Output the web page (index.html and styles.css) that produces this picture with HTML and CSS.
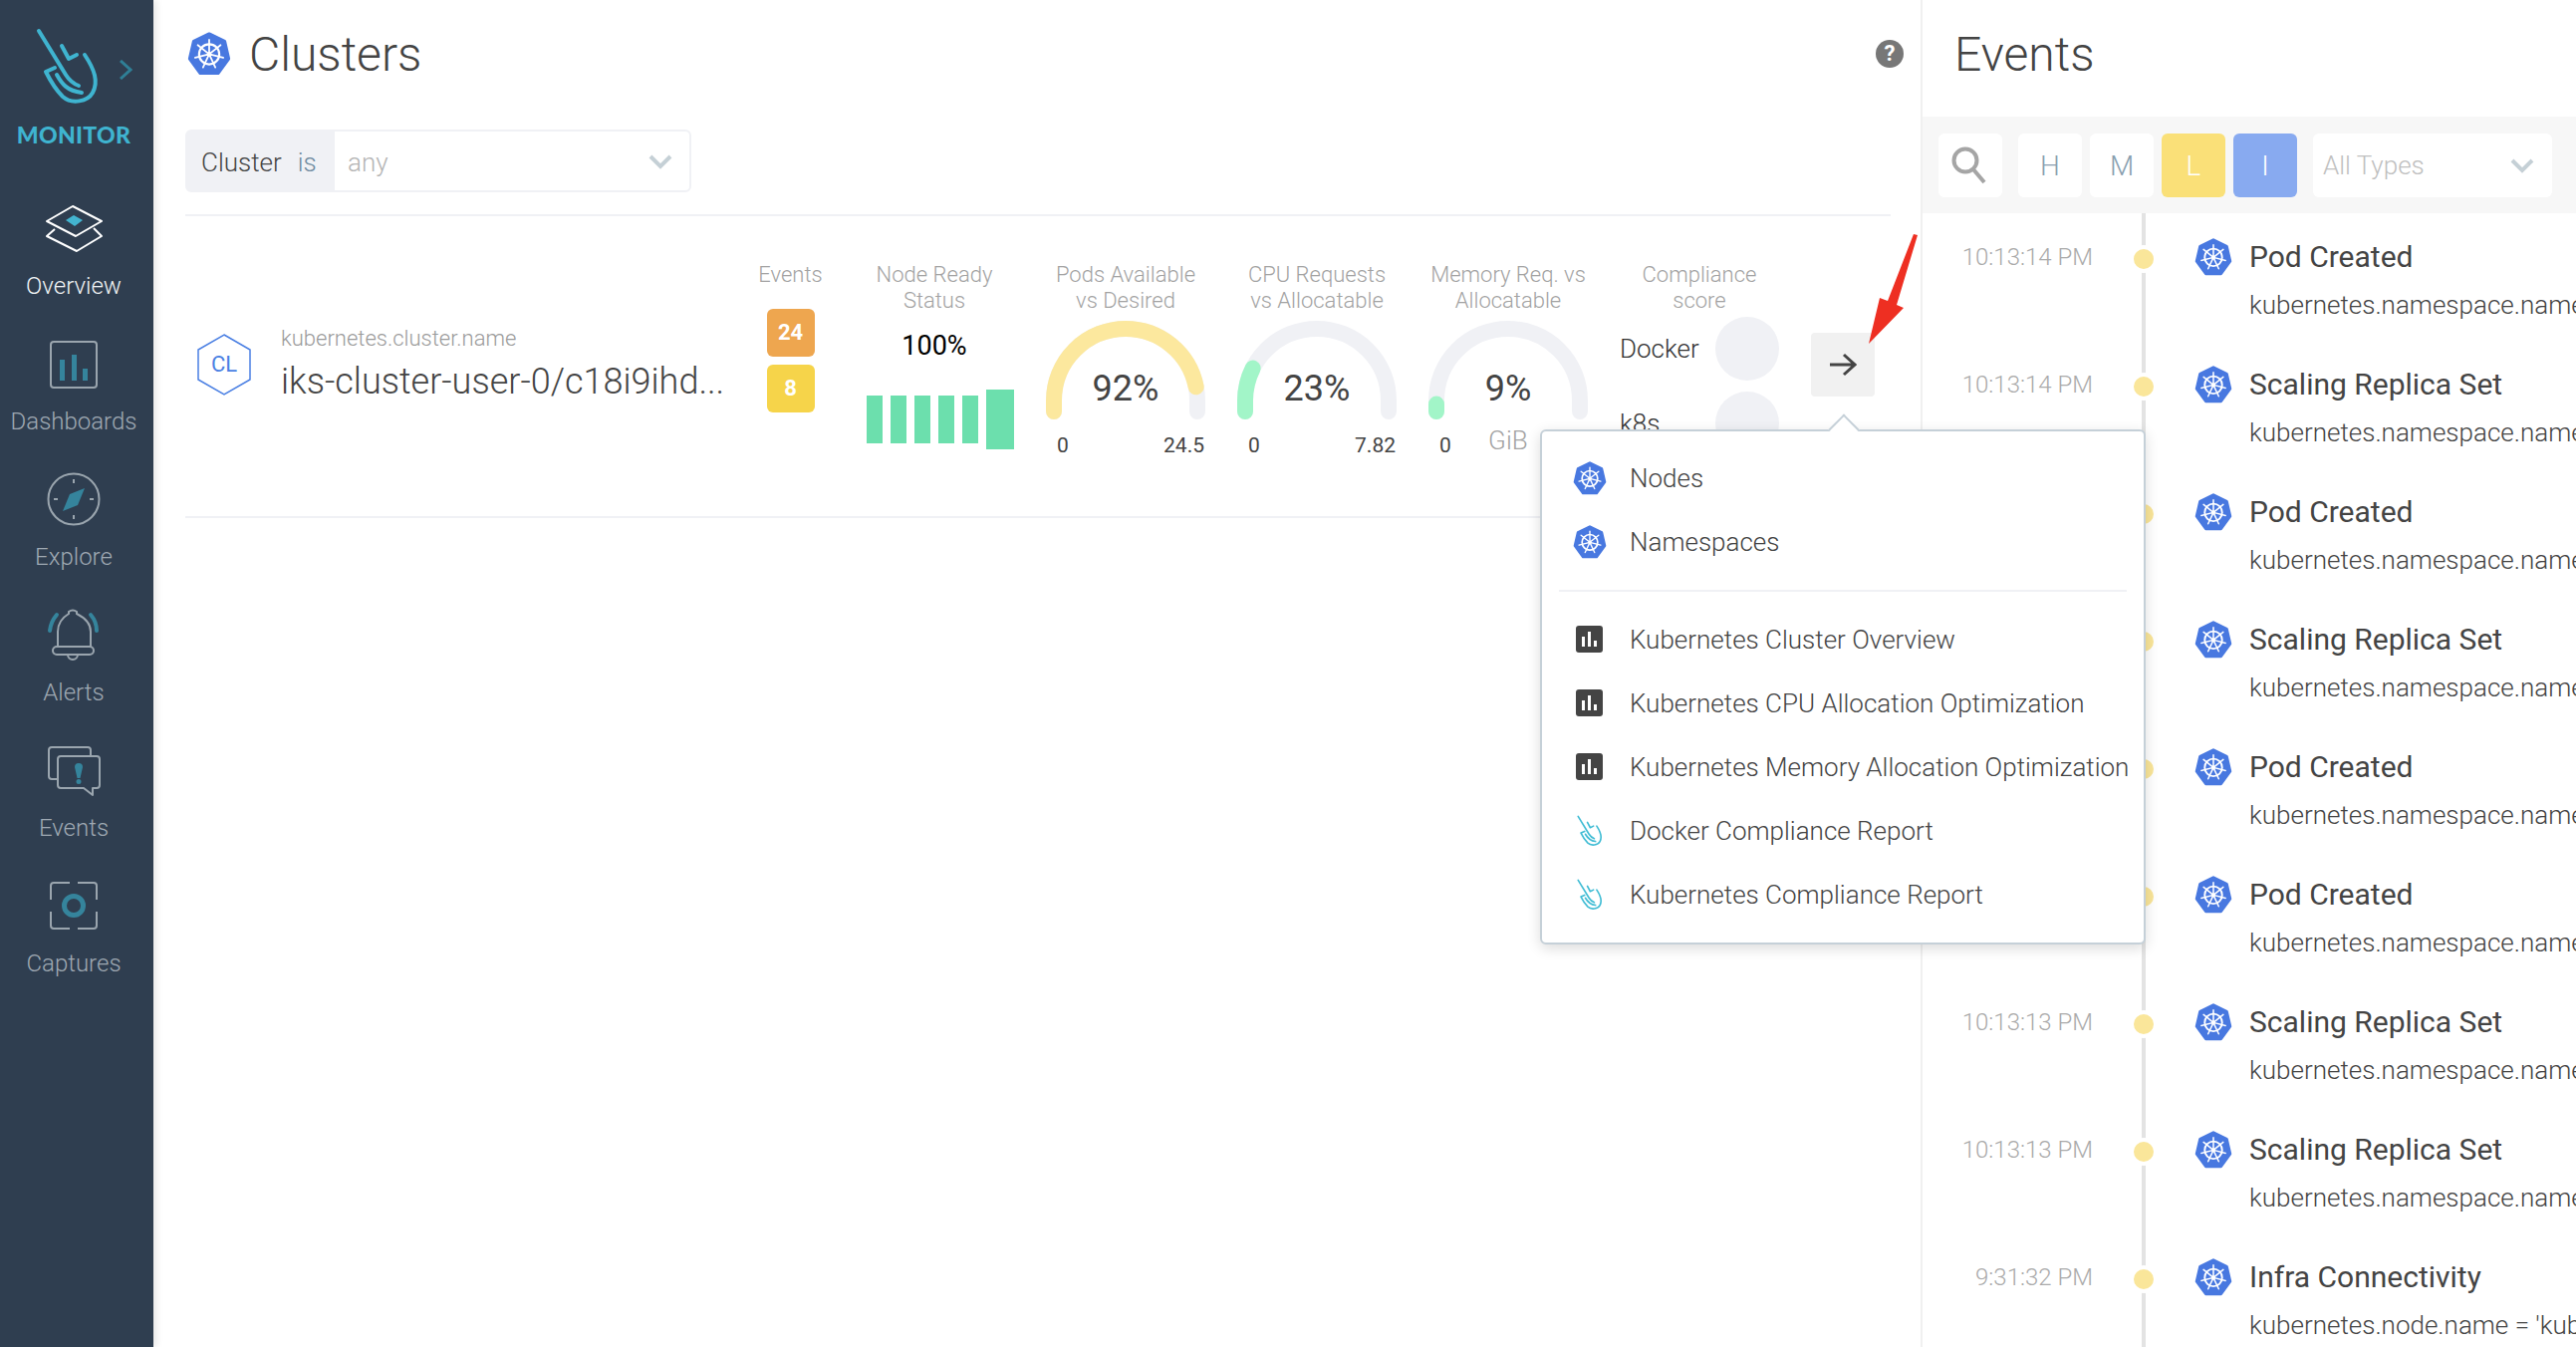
FILE: index.html
```html
<!DOCTYPE html>
<html>
<head>
    <meta charset="utf-8" />
    <title>Clusters</title>
    <link rel="stylesheet" href="styles.css">
</head>
<body>
    <svg class="defs" width="0" height="0">
        <symbol id="kube" viewBox="0 0 100 100">
            <polygon points="50,5 85,22 94,61 70,94 30,94 6,61 15,22" fill="#4878e0" stroke="#4878e0" stroke-width="8" stroke-linejoin="round" />
            <g fill="none" stroke="#fff">
                <circle cx="50" cy="51" r="23" stroke-width="5" />
                <circle cx="50" cy="51" r="5" fill="#fff" stroke="none" />
                <path stroke-width="4" stroke-linecap="round" d="M50 51V18M50 51L76 30M50 51L82 59M50 51L64 81M50 51L36 81M50 51L18 59M50 51L24 30" />
            </g>
        </symbol>
        <symbol id="logo" viewBox="36 26 64 78">
            <g fill="none" stroke="currentColor" stroke-width="4" stroke-linecap="round" stroke-linejoin="round">
                <path d="M39 29L66 73Q71 81 79 84" />
                <path d="M62 44L69 57L77 53" />
                <path d="M85 53C95 68 99 80 93 91C88 100 72 103 63 95C57 89 50 78 46 70L55 66" />
                <path d="M57 73C62 82 67 89 82 91" />
            </g>
        </symbol>
        <symbol id="chart" viewBox="0 0 27 27">
            <rect width="27" height="27" rx="3" fill="#444" />
            <path fill="#fff" d="M6 11h3v10H6zM12 6h3v15h-3zM18 15h3v6h-3z" />
        </symbol>
        <symbol id="chev" viewBox="0 0 24 16">
            <path d="M2 3l10 10L22 3" fill="none" stroke="#c5d0d6" stroke-width="4" />
        </symbol>
    </svg>

    <nav class="side">
        <div class="brand">
            <svg class="brand-logo"><use href="#logo" /></svg>
            <svg class="brand-chev" viewBox="0 0 13 20"><path d="M1 1l10 9-10 9" fill="none" stroke="#2f7f96" stroke-width="3" /></svg>
            <div class="brand-name">MONITOR</div>
        </div>
        <a class="nav-item active">
            <svg class="nav-icon" viewBox="44 197 60 64">
                <path fill="none" stroke="#fff" stroke-width="2" stroke-linejoin="round" d="M73 207L102 222L76 237L47 222Z" />
                <path fill="none" stroke="#fff" stroke-width="2" stroke-linejoin="round" d="M55 230L47 237L77 252L102 237L94 229" />
                <path fill="#43b4d0" d="M66 221L74 216L83 221L75 227Z" />
            </svg>
            <span>Overview</span>
        </a>
        <a class="nav-item">
            <svg class="nav-icon" viewBox="44 333 60 64">
                <rect x="51" y="343" width="46" height="46" rx="3" fill="none" stroke="#9aa5ae" stroke-width="2" />
                <path fill="#35849c" d="M60 361h5v21h-5zM72 356h5v26h-5zM83 370h5v12h-5z" />
            </svg>
            <span>Dashboards</span>
        </a>
        <a class="nav-item">
            <svg class="nav-icon" viewBox="44 470 60 64">
                <circle cx="74" cy="502" r="25.500" fill="none" stroke="#9aa5ae" stroke-width="2" />
                <path stroke="#9aa5ae" stroke-width="2" d="M74 482v4M74 518v4M54 502h4M90 502h4" />
                <path fill="#35849c" d="M85 491L78 508L63 514L70 497Z" />
            </svg>
            <span>Explore</span>
        </a>
        <a class="nav-item">
            <svg class="nav-icon" viewBox="44 606 60 64">
                <g fill="none" stroke="#9aa5ae" stroke-width="2">
                    <path d="M58 650V635C58 625 64 620 69 617V615Q73 612 77 615V617C83 620 91 625 91 635V650" />
                    <rect x="53" y="650" width="41" height="8" rx="4" />
                    <path d="M68 658a5 5 0 0 0 10 0" />
                </g>
                <path fill="none" stroke="#35849c" stroke-width="4" stroke-linecap="round" d="M57 618Q51 625 50 634M91 618Q97 625 97 634" />
            </svg>
            <span>Alerts</span>
        </a>
        <a class="nav-item">
            <svg class="nav-icon" viewBox="44 742 60 64">
                <g fill="none" stroke="#9aa5ae" stroke-width="2" stroke-linejoin="round">
                    <path d="M58 783H52Q49 783 49 780V754Q49 751 52 751H88Q91 751 91 754V760" />
                    <path d="M61 760H97Q100 760 100 763V789Q100 792 97 792H93V799L84 792H61Q58 792 58 789V763Q58 760 61 760Z" />
                </g>
                <path fill="#35849c" d="M75 771a4 4 0 0 1 8 0L80.500 782h-3zM79 783a2.500 2.500 0 1 1 0 5a2.500 2.500 0 1 1 0-5z" />
            </svg>
            <span>Events</span>
        </a>
        <a class="nav-item">
            <svg class="nav-icon" viewBox="44 878 60 64">
                <path fill="none" stroke="#9aa5ae" stroke-width="2" d="M70 887H54Q51 887 51 890V904M78 887H94Q97 887 97 890V904M70 933H54Q51 933 51 930V916M78 933H94Q97 933 97 930V916" />
                <circle cx="74" cy="910" r="9.500" fill="none" stroke="#35849c" stroke-width="5" />
            </svg>
            <span>Captures</span>
        </a>
    </nav>

    <main class="main">
        <header class="page-head">
            <svg class="head-icon"><use href="#kube" /></svg>
            <h1 class="page-title">Clusters</h1>
            <div class="help">?</div>
        </header>

        <div class="filter">
            <div class="filter-label">Cluster <em>is</em></div>
            <div class="filter-value">any</div>
            <svg class="chev"><use href="#chev" /></svg>
        </div>

        <section class="row">
            <div class="entity">
                <svg class="hex" viewBox="0 0 54 62">
                    <polygon points="27,1 53,16 53,46 27,61 1,46 1,16" fill="none" stroke="#4a7fe3" stroke-width="1.500" />
                    <text x="27" y="38" text-anchor="middle" class="hex-text">CL</text>
                </svg>
                <div class="entity-text">
                    <div class="entity-key">kubernetes.cluster.name</div>
                    <div class="entity-name">iks-cluster-user-0/c18i9ihd...</div>
                </div>
            </div>

            <div class="col col-events">
                <div class="col-label">Events</div>
                <div class="badge badge-med">24</div>
                <div class="badge badge-low">8</div>
            </div>

            <div class="col">
                <div class="col-label">Node Ready<br>Status</div>
                <div class="ready">100%</div>
                <div class="bars">
                    <i></i><i></i><i></i><i></i><i></i><i class="bar-last"></i>
                </div>
            </div>

            <div class="col">
                <div class="col-label">Pods Available<br>vs Desired</div>
                <div class="gauge">
                    <svg width="160" height="100" viewBox="0 0 160 100">
                        <path class="arc" d="M8 91V80A72 72 0 0 1 152 80V91" />
                        <path class="arc arc-yellow" pathLength="100" stroke-dasharray="90 200" d="M8 91V80A72 72 0 0 1 152 80V91" />
                    </svg>
                    <div class="gauge-value">92%</div>
                </div>
                <div class="scale"><span>0</span><span>24.5</span></div>
            </div>

            <div class="col">
                <div class="col-label">CPU Requests<br>vs Allocatable</div>
                <div class="gauge">
                    <svg width="160" height="100" viewBox="0 0 160 100">
                        <path class="arc" d="M8 91V80A72 72 0 0 1 152 80V91" />
                        <path class="arc arc-green" pathLength="100" stroke-dasharray="18 200" d="M8 91V80A72 72 0 0 1 152 80V91" />
                    </svg>
                    <div class="gauge-value">23%</div>
                </div>
                <div class="scale"><span>0</span><span>7.82</span></div>
            </div>

            <div class="col">
                <div class="col-label">Memory Req. vs<br>Allocatable</div>
                <div class="gauge">
                    <svg width="160" height="100" viewBox="0 0 160 100">
                        <path class="arc" d="M8 91V80A72 72 0 0 1 152 80V91" />
                        <path class="arc arc-green" pathLength="100" stroke-dasharray="3 200" d="M8 91V80A72 72 0 0 1 152 80V91" />
                    </svg>
                    <div class="gauge-value">9%</div>
                </div>
                <div class="scale scale-mem"><span>0</span><span class="unit">GiB</span><span class="pad"></span></div>
            </div>

            <div class="col">
                <div class="col-label">Compliance<br>score</div>
                <div class="comp-list">
                    <div class="comp"><span>Docker</span><i></i></div>
                    <div class="comp"><span>k8s</span><i></i></div>
                </div>
            </div>

            <div class="go">
                <svg viewBox="0 0 28 24" width="28" height="24"><path d="M1 12h25M15 2l11 10-11 10" fill="none" stroke="#444" stroke-width="3" /></svg>
            </div>
        </section>

        <div class="popover">
            <div class="pop-item"><svg class="pop-kube"><use href="#kube" /></svg>Nodes</div>
            <div class="pop-item"><svg class="pop-kube"><use href="#kube" /></svg>Namespaces</div>
            <div class="pop-sep"></div>
            <div class="pop-item"><svg class="pop-chart"><use href="#chart" /></svg>Kubernetes Cluster Overview</div>
            <div class="pop-item"><svg class="pop-chart"><use href="#chart" /></svg>Kubernetes CPU Allocation Optimization</div>
            <div class="pop-item"><svg class="pop-chart"><use href="#chart" /></svg>Kubernetes Memory Allocation Optimization</div>
            <div class="pop-item"><svg class="pop-logo"><use href="#logo" /></svg>Docker Compliance Report</div>
            <div class="pop-item"><svg class="pop-logo"><use href="#logo" /></svg>Kubernetes Compliance Report</div>
        </div>

        <!-- red annotation arrow -->
        <svg class="mark" width="60" height="125" viewBox="1870 230 60 125">
            <path fill="#ee2f22" d="M1876 345L1887 299L1895 302L1921 235L1925 236L1904 306L1911 309Z" />
        </svg>
    </main>

    <aside class="events">
        <h2 class="events-title">Events</h2>
        <div class="tools">
            <div class="tool">
                <svg width="40" height="40" viewBox="0 0 40 40"><circle cx="15" cy="15" r="11.500" fill="none" stroke="#a5a5a5" stroke-width="4" /><path d="M23 24l11 13" stroke="#a5a5a5" stroke-width="4" /></svg>
            </div>
            <div class="tool tool-h">H</div>
            <div class="tool">M</div>
            <div class="tool tool-l">L</div>
            <div class="tool tool-i">I</div>
            <div class="tool-select">All Types<svg class="chev"><use href="#chev" /></svg></div>
            <div class="tool-select">All Types</div>
        </div>
        <div class="timeline">
            <div class="ev"><time>10:13:14 PM</time><i class="dot"></i><svg class="ev-icon"><use href="#kube" /></svg><div class="ev-body"><div class="ev-title">Pod Created</div><div class="ev-sub">kubernetes.namespace.name = 'kube-system'</div></div></div>
            <div class="ev"><time>10:13:14 PM</time><i class="dot"></i><svg class="ev-icon"><use href="#kube" /></svg><div class="ev-body"><div class="ev-title">Scaling Replica Set</div><div class="ev-sub">kubernetes.namespace.name = 'kube-system'</div></div></div>
            <div class="ev"><time>10:13:14 PM</time><i class="dot"></i><svg class="ev-icon"><use href="#kube" /></svg><div class="ev-body"><div class="ev-title">Pod Created</div><div class="ev-sub">kubernetes.namespace.name = 'kube-system'</div></div></div>
            <div class="ev"><time>10:13:14 PM</time><i class="dot"></i><svg class="ev-icon"><use href="#kube" /></svg><div class="ev-body"><div class="ev-title">Scaling Replica Set</div><div class="ev-sub">kubernetes.namespace.name = 'kube-system'</div></div></div>
            <div class="ev"><time>10:13:14 PM</time><i class="dot"></i><svg class="ev-icon"><use href="#kube" /></svg><div class="ev-body"><div class="ev-title">Pod Created</div><div class="ev-sub">kubernetes.namespace.name = 'kube-system'</div></div></div>
            <div class="ev"><time>10:13:14 PM</time><i class="dot"></i><svg class="ev-icon"><use href="#kube" /></svg><div class="ev-body"><div class="ev-title">Pod Created</div><div class="ev-sub">kubernetes.namespace.name = 'kube-system'</div></div></div>
            <div class="ev"><time>10:13:13 PM</time><i class="dot"></i><svg class="ev-icon"><use href="#kube" /></svg><div class="ev-body"><div class="ev-title">Scaling Replica Set</div><div class="ev-sub">kubernetes.namespace.name = 'kube-system'</div></div></div>
            <div class="ev"><time>10:13:13 PM</time><i class="dot"></i><svg class="ev-icon"><use href="#kube" /></svg><div class="ev-body"><div class="ev-title">Scaling Replica Set</div><div class="ev-sub">kubernetes.namespace.name = 'kube-system'</div></div></div>
            <div class="ev"><time>9:31:32 PM</time><i class="dot"></i><svg class="ev-icon"><use href="#kube" /></svg><div class="ev-body"><div class="ev-title">Infra Connectivity</div><div class="ev-sub">kubernetes.node.name = 'kube-node-0'</div></div></div>
        </div>
    </aside>
</body>
</html>
```

FILE: styles.css
```css
html, body {
    height: 100%;
    overflow: hidden;
}

body {
    margin: 0;
    display: flex;
    background: #fff;
    color: #444;
    font-family: Roboto, "Liberation Sans", sans-serif;
    font-weight: 300;
}

.defs {
    position: absolute;
}

/* sidebar */
.side {
    width: 154px;
    flex: none;
    background: #2f3e50;
    box-shadow: 2px 0 8px rgba(0, 0, 0, 0.12);
    z-index: 2;
}

.brand {
    position: relative;
    height: 197px;
    box-sizing: border-box;
    padding-top: 28px;
    padding-right: 6px;
    text-align: center;
    color: #3fb4d0;
}

.brand-logo {
    display: block;
    width: 64px;
    height: 78px;
    margin-left: 36px;
}

.brand-chev {
    position: absolute;
    left: 120px;
    top: 60px;
    width: 13px;
    height: 20px;
}

.brand-name {
    margin-top: 14px;
    font-family: Lato, sans-serif;
    font-size: 23px;
    font-weight: 900;
    line-height: 30px;
    letter-spacing: 0.3px;
}

.nav-item {
    display: block;
    height: 136px;
    padding-right: 6px;
    text-align: center;
    color: #9fa9b3;
    font-size: 24px;
    line-height: 30px;
}

.nav-item.active {
    color: #f0f3f5;
}

.nav-item span {
    display: block;
    margin-top: 11px;
}

.nav-icon {
    display: block;
    width: 60px;
    height: 64px;
    margin: 0 auto;
}

/* main column */
.main {
    position: relative;
    flex: none;
    width: 1776px;
    box-sizing: border-box;
    padding: 0 30px 0 32px;
    border-right: 2px solid #f0f0f0;
}

.page-head {
    display: flex;
    align-items: center;
    height: 108px;
    padding-left: 2px;
}

.head-icon {
    width: 44px;
    height: 44px;
    margin-right: 18px;
}

.page-title,
.events-title {
    margin: 0;
    font-size: 48px;
    font-weight: 300;
    line-height: 60px;
}

.page-title {
    margin-top: 2px;
}

.help {
    margin: 0 -13px 0 auto;
    width: 28px;
    height: 28px;
    border-radius: 50%;
    background: #777;
    color: #fff;
    font-size: 22px;
    font-weight: 700;
    line-height: 28px;
    text-align: center;
}

.filter {
    display: flex;
    align-items: center;
    width: 508px;
    height: 63px;
    box-sizing: border-box;
    margin-top: 22px;
    border: 2px solid #f0f1f5;
    border-radius: 6px;
    font-size: 26px;
}

.filter-label {
    display: flex;
    align-items: center;
    align-self: stretch;
    width: 148px;
    padding: 2px 0 0 14px;
    box-sizing: border-box;
    background: #f0f1f5;
}

.filter-label em {
    margin-left: 16px;
    color: #6f8ba0;
    font-style: normal;
}

.filter-value {
    flex: 1;
    padding: 2px 0 0 13px;
    color: #b5b5b5;
}

.chev {
    width: 24px;
    height: 16px;
    margin-right: 17px;
}

/* cluster row */
.row {
    display: flex;
    height: 301px;
    margin-top: 22px;
    border-top: 2px solid #f0f1f5;
    border-bottom: 2px solid #f0f1f5;
}

.entity {
    display: flex;
    align-items: center;
    flex: none;
    width: 559px;
    box-sizing: border-box;
    padding: 58px 0 0 12px;
    align-self: flex-start;
    height: 240px;
}

.hex {
    width: 54px;
    height: 62px;
    flex: none;
    margin-right: 30px;
}

.hex-text {
    fill: #4a7fe3;
    font-size: 22px;
    font-weight: 400;
}

.entity-key {
    color: #9b9b9b;
    font-size: 22px;
    line-height: 28px;
}

.entity-name {
    margin-top: 6px;
    font-size: 36px;
    line-height: 46px;
    white-space: nowrap;
}

.col {
    position: relative;
    width: 192px;
    box-sizing: border-box;
    padding: 46px 10px 0;
    text-align: center;
}

.col-events {
    width: 97px;
    padding-left: 0;
    padding-right: 0;
}

.col-label {
    height: 47px;
    color: #a3a3a3;
    font-size: 22px;
    line-height: 26px;
    white-space: nowrap;
}

.badge {
    width: 48px;
    height: 48px;
    margin: 0 auto 8px;
    border-radius: 6px;
    color: #fff;
    font-size: 22px;
    font-weight: 700;
    line-height: 48px;
}

.badge-med {
    background: #eea64f;
}

.badge-low {
    background: #f6d44a;
}

.ready {
    margin-top: 20px;
    color: #000;
    font-size: 27px;
    font-weight: 400;
    line-height: 34px;
}

.bars {
    display: flex;
    align-items: center;
    justify-content: center;
    gap: 8px;
    height: 60px;
    margin-top: 27px;
    margin-left: 12px;
}

.bars i {
    width: 16px;
    height: 48px;
    background: #6cdfad;
}

.bars .bar-last {
    width: 28px;
    height: 60px;
}

.gauge {
    position: relative;
    width: 160px;
    height: 100px;
    margin: 12px auto 0;
}

.gauge svg {
    display: block;
}

.arc {
    fill: none;
    stroke: #f0f1f5;
    stroke-width: 16;
    stroke-linecap: round;
}

.arc-yellow {
    stroke: #fce89e;
}

.arc-green {
    stroke: #a2f5c8;
}

.gauge-value {
    position: absolute;
    left: 0;
    right: 0;
    top: 46px;
    font-size: 36px;
    font-weight: 400;
    line-height: 44px;
}

.scale {
    display: flex;
    justify-content: space-between;
    width: 148px;
    margin: 12px 0 0 17px;
    font-size: 21px;
    font-weight: 400;
    line-height: 26px;
}

.scale-mem .unit {
    margin: -5px 10px 0 0;
    color: #a3a3a3;
    font-size: 26px;
    font-weight: 300;
}

.scale-mem .pad {
    width: 12px;
}

.comp-list {
    margin-top: 8px;
}

.comp {
    display: flex;
    align-items: center;
    justify-content: space-between;
    height: 64px;
    margin: 0 6px 11px 6px;
    color: #333;
    font-size: 26px;
}

.comp i {
    width: 64px;
    height: 64px;
    border-radius: 50%;
    background: #f0f1f5;
}

.go {
    display: flex;
    align-items: center;
    justify-content: center;
    width: 64px;
    height: 64px;
    margin: 117px 0 0 16px;
    border-radius: 4px;
    background: #f1f1f1;
}

/* dropdown under the arrow button */
.popover {
    position: absolute;
    left: 1392px;
    top: 431px;
    width: 608px;
    box-sizing: border-box;
    padding: 15px 0 16px;
    border: 2px solid #c5d0d8;
    border-radius: 6px;
    background: #fff;
    box-shadow: 0 4px 14px rgba(0, 0, 0, 0.14);
    z-index: 5;
}

.popover::before {
    content: "";
    position: absolute;
    left: 292px;
    top: -13px;
    width: 20px;
    height: 20px;
    border-left: 2px solid #c5d0d8;
    border-top: 2px solid #c5d0d8;
    background: #fff;
    transform: rotate(45deg);
}

.pop-item {
    position: relative;
    display: flex;
    align-items: center;
    height: 64px;
    padding-left: 88px;
    font-size: 26px;
    white-space: nowrap;
}

.pop-item svg {
    position: absolute;
}

.pop-kube {
    left: 31px;
    top: 15px;
    width: 34px;
    height: 34px;
}

.pop-chart {
    left: 34px;
    top: 18px;
    width: 27px;
    height: 27px;
}

.pop-logo {
    left: 35px;
    top: 16px;
    width: 26px;
    height: 32px;
    color: #3fbcd4;
}

.pop-sep {
    height: 2px;
    margin: 16px 17px;
    background: #f0f1f5;
}

.mark {
    position: absolute;
    left: 1716px;
    top: 230px;
    z-index: 6;
}

/* events panel */
.events {
    flex: 1;
    min-width: 0;
    overflow: hidden;
}

.events-title {
    height: 117px;
    padding: 25px 0 0 32px;
    box-sizing: border-box;
}

.tools {
    display: flex;
    gap: 8px;
    height: 97px;
    box-sizing: border-box;
    padding: 17px 0 0 16px;
    background: #f7f7f7;
}

.tool {
    flex: none;
    display: flex;
    align-items: center;
    justify-content: center;
    width: 64px;
    height: 64px;
    border-radius: 6px;
    background: #fff;
    color: #8a9fb0;
    font-size: 28px;
}

.tool:first-child,
.tool-select {
    margin-right: 8px;
}

.tool-l {
    background: #fae078;
    color: #fff;
}

.tool-i {
    background: #88aaf0;
    color: #fff;
}

.tool-select {
    flex: none;
    display: flex;
    align-items: center;
    justify-content: space-between;
    width: 240px;
    height: 64px;
    box-sizing: border-box;
    padding-left: 10px;
    border-radius: 6px;
    background: #fff;
    color: #c0c0c0;
    font-size: 26px;
    margin-left: 8px;
}

.tool-select .chev {
    margin-right: 18px;
}

.timeline {
    position: relative;
    padding-top: 23px;
}

.timeline::before {
    content: "";
    position: absolute;
    left: 220px;
    top: 0;
    width: 4px;
    height: 1200px;
    background: #e3e3e3;
}

.ev {
    position: relative;
    display: flex;
    height: 128px;
    white-space: nowrap;
}

.ev time {
    flex: none;
    width: 171px;
    padding-top: 6px;
    color: #aaa;
    font-size: 24px;
    line-height: 30px;
    text-align: right;
}

.dot {
    position: absolute;
    left: 208px;
    top: 9px;
    width: 20px;
    height: 20px;
    border: 4px solid #fff;
    border-radius: 50%;
    background: #fae69a;
}

.ev-icon {
    width: 38px;
    height: 38px;
    flex: none;
    margin: 2px 17px 0 102px;
}

.ev-title {
    margin-top: 1px;
    font-size: 30px;
    font-weight: 400;
    line-height: 40px;
}

.ev-sub {
    margin-top: 8px;
    font-size: 26px;
    line-height: 40px;
}
```
